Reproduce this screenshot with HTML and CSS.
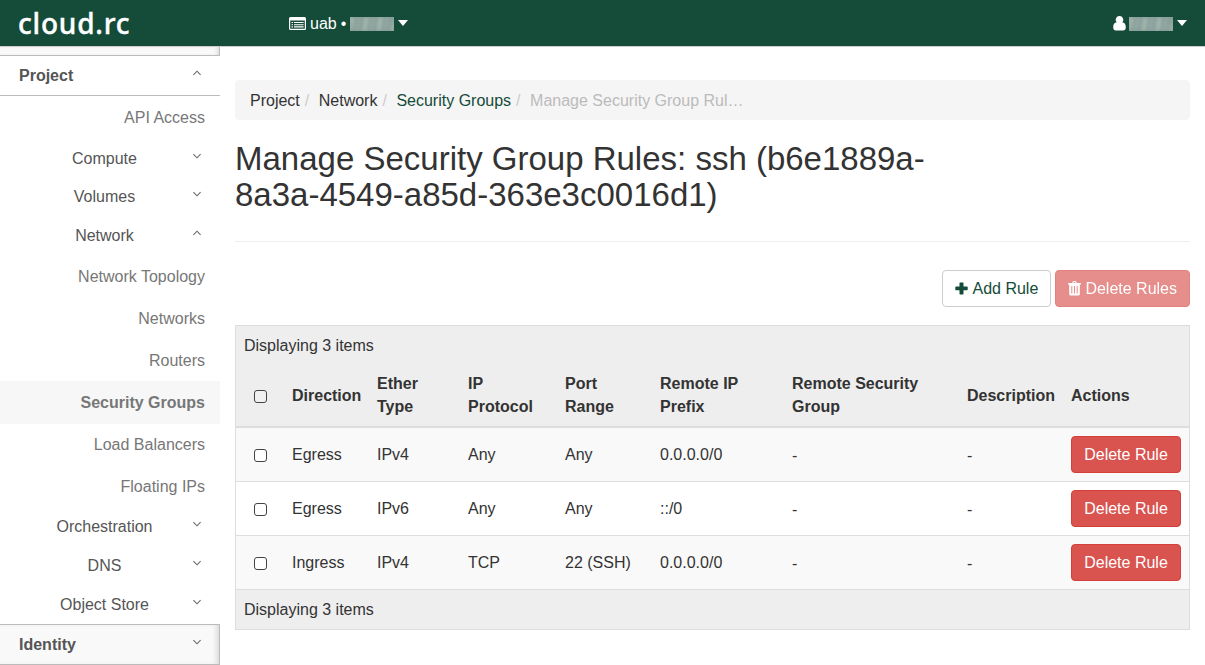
FILE: index.html
```html
<!DOCTYPE html>
<html lang="en">
<head>
<meta charset="utf-8">
<title>Manage Security Group Rules</title>
<link rel="stylesheet" href="styles.css">
</head>
<body>
<header class="navbar">
  <a class="brand">cloud.rc</a>
  <div class="context">
    <svg class="list-icon" width="17" height="13" viewBox="0 0 17 13"><path fill="#fff" fill-rule="evenodd" d="M1.5 0h14A1.5 1.5 0 0 1 17 1.5v10a1.5 1.5 0 0 1-1.5 1.5h-14A1.5 1.5 0 0 1 0 11.500v-10A1.500 1.500 0 0 1 1.500 0zM1.200 3.500v8.200h14.600V3.500z"/><path stroke="#fff" stroke-width="1.100" d="M2.500 5.500h1.500M2.500 7.700h1.500M2.500 9.900h1.500M5 5.500h9.600M5 7.700h9.600M5 9.900h9.600"/></svg>
    <span class="domain">uab</span><span class="dot">•</span>
    <span class="redacted"><i></i></span>
    <span class="caret"></span>
  </div>
  <div class="user">
    <svg width="13" height="15" viewBox="0 0 13 15"><path fill="#fff" d="M6.500 0a3.700 3.700 0 0 1 2.800 6.200c2.400.1 3.500 2 3.500 5 0 2-1 3.300-2.800 3.300H3C1.200 14.500.2 13.200.2 11.200c0-3 1.100-4.900 3.500-5A3.700 3.700 0 0 1 6.500 0z"/></svg>
    <span class="redacted"><i></i></span>
    <span class="caret"></span>
  </div>
</header>
<div class="layout">
  <nav class="sidebar">
    <div class="cut"></div>
    <div class="panel open"><span>Project</span><svg class="chev" viewBox="0 0 8 5"><path d="M1 4l3-3 3 3"/></svg></div>
    <a class="leaf">API Access</a>
    <div class="group first"><span>Compute</span><svg class="chev" viewBox="0 0 8 5"><path d="M1 1l3 3 3-3"/></svg></div>
    <div class="group"><span>Volumes</span><svg class="chev" viewBox="0 0 8 5"><path d="M1 1l3 3 3-3"/></svg></div>
    <div class="group"><span>Network</span><svg class="chev" viewBox="0 0 8 5"><path d="M1 4l3-3 3 3"/></svg></div>
    <a class="leaf">Network Topology</a>
    <a class="leaf">Networks</a>
    <a class="leaf">Routers</a>
    <a class="leaf active">Security Groups</a>
    <a class="leaf">Load Balancers</a>
    <a class="leaf last">Floating IPs</a>
    <div class="group"><span>Orchestration</span><svg class="chev" viewBox="0 0 8 5"><path d="M1 1l3 3 3-3"/></svg></div>
    <div class="group"><span>DNS</span><svg class="chev" viewBox="0 0 8 5"><path d="M1 1l3 3 3-3"/></svg></div>
    <div class="group"><span>Object Store</span><svg class="chev" viewBox="0 0 8 5"><path d="M1 1l3 3 3-3"/></svg></div>
    <div class="panel closed"><span>Identity</span><svg class="chev" viewBox="0 0 8 5"><path d="M1 1l3 3 3-3"/></svg></div>
  </nav>
  <main class="content">
    <div class="breadcrumb"><span>Project</span><span>Network</span><span class="link">Security Groups</span><span class="current">Manage Security Group Rul…</span></div>
    <h1>Manage Security Group Rules: ssh (b6e1889a-<br>8a3a-4549-a85d-363e3c0016d1)</h1>
    <div class="toolbar">
      <button class="btn add"><svg width="13" height="13" viewBox="0 0 13 13"><path fill="currentColor" d="M5 .5h3q.5 0 .5.500v3.500h3.500q.7 0 .7.700v2.300q0 .7-.7.700H8.500v3.600q0 .7-.7.700H5.200q-.7 0-.7-.7V8.200H1q-.7 0-.7-.7V5.200q0-.7.7-.7h3.500V1q0-.5.500-.5z"/></svg>Add Rule</button>
      <button class="btn danger disabled"><svg width="13" height="15" viewBox="0 0 13 15"><path fill="#fff" fill-rule="evenodd" d="M4.200 2l.6-1.500Q5 0 5.500 0h2q.5 0 .7.500L8.800 2h3.700q.5 0 .5.500v1h-1.200V13q0 1.500-1.500 1.500H2.700Q1.200 14.500 1.200 13V3.500H0v-1Q0 2 .5 2zm1.200 0h2.200L7.200 1H5.800zM3.300 5v7.500h1V5zm2.700 0v7.500h1V5zm2.700 0v7.500h1V5z"/></svg>Delete Rules</button>
    </div>
    <table class="rules">
      <colgroup><col class="c-check"><col class="c-dir"><col class="c-ether"><col class="c-proto"><col class="c-port"><col class="c-prefix"><col class="c-group"><col class="c-desc"><col class="c-act"></colgroup>
      <thead>
        <tr class="count"><td colspan="9">Displaying 3 items</td></tr>
        <tr class="heads"><th><span class="box"></span></th><th>Direction</th><th>Ether<br>Type</th><th>IP<br>Protocol</th><th>Port<br>Range</th><th>Remote IP<br>Prefix</th><th>Remote Security<br>Group</th><th>Description</th><th>Actions</th></tr>
      </thead>
      <tbody>
        <tr><td><span class="box"></span></td><td>Egress</td><td>IPv4</td><td>Any</td><td>Any</td><td>0.0.0.0/0</td><td class="none">-</td><td class="none">-</td><td><button class="btn danger">Delete Rule</button></td></tr>
        <tr><td><span class="box"></span></td><td>Egress</td><td>IPv6</td><td>Any</td><td>Any</td><td>::/0</td><td class="none">-</td><td class="none">-</td><td><button class="btn danger">Delete Rule</button></td></tr>
        <tr><td><span class="box"></span></td><td>Ingress</td><td>IPv4</td><td>TCP</td><td>22 (SSH)</td><td>0.0.0.0/0</td><td class="none">-</td><td class="none">-</td><td><button class="btn danger">Delete Rule</button></td></tr>
      </tbody>
      <tfoot><tr class="count"><td colspan="9">Displaying 3 items</td></tr></tfoot>
    </table>
  </main>
</div>
</body>
</html>
```
FILE: styles.css
```css
* { box-sizing: border-box; }
body { margin: 0; height: 665px; overflow: hidden; background: #fff; color: #333; font: 16px/23px "Liberation Sans", Arial, sans-serif; }
.navbar { height: 47px; display: flex; align-items: center; background: #144b39; border-bottom: 1px solid #ccc; color: #fff; }
.brand { width: 289px; padding-left: 18px; font: 500 28px/46px "Noto Sans", sans-serif; letter-spacing: .8px; -webkit-text-stroke: .4px #fff; }
.context, .user { display: flex; align-items: center; }
.domain { margin-left: 4px; }
.dot { margin: 0 4px; }
.user { margin-left: auto; padding-right: 18px; }
.user .redacted { margin-left: 3px; }
.redacted { width: 44px; height: 14px; margin-top: 1px; overflow: hidden; background: #7f9992; }
.redacted i { display: block; height: 14px; filter: blur(2px); background: repeating-linear-gradient(100deg, #b5c5bd 0 4px, #718e85 5px 7px, #a6b4b4 8px 11px, #638479 12px 14px); }
.caret { margin-left: 4px; border: 5px solid transparent; border-top: 6px solid #fff; border-bottom: 0; }
.layout { display: flex; }
.sidebar { width: 220px; flex: none; color: #555; }
.cut { height: 8px; background: #f9f9f9; border-right: 1px solid #bbb; box-shadow: inset -4px 0 4px -2px #ddd; }
.panel { height: 41px; display: flex; align-items: center; justify-content: space-between; padding: 0 18px 0 19px; font-weight: bold; border-top: 1px solid #bbb; border-bottom: 1px solid #bbb; }
.closed { background: #f9f9f9; border-right: 1px solid #bbb; padding-right: 17px; box-shadow: inset -5px 0 5px -2px #ddd; }
.chev { width: 10px; height: 6px; margin-bottom: 5px; fill: none; stroke: #666; stroke-width: .9; }
.leaf { display: block; height: 42px; padding-right: 15px; line-height: 44px; text-align: right; color: #777; }
.active { height: 43px; background: #f7f7f7; font-weight: bold; }
.active + .leaf { line-height: 42px; }
.leaf.last { height: 41px; line-height: 41px; }
.group { height: 39px; display: grid; grid-template-columns: 209px 10px; align-items: center; }
.group.first { padding-top: 1px; }
.group span { text-align: center; }
.group .chev { margin-left: -17px; }
.content { width: 955px; margin: 33px 0 0 15px; }
.breadcrumb { height: 40px; display: flex; align-items: center; padding-left: 15px; border-radius: 4px; background: #f5f5f5; }
.breadcrumb span + span::before { content: "/"; color: #ccc; padding: 0 9.5px 0 5px; }
.link { color: #144b39; }
.current { color: #bbb; }
h1 { height: 122px; margin: 0; padding-top: 21px; border-bottom: 1px solid #eee; font-size: 33px; line-height: 36px; font-weight: normal; }
.toolbar { display: flex; justify-content: flex-end; gap: 4px; margin: 28px 0 18px; }
.btn { height: 37px; display: flex; align-items: center; justify-content: center; gap: 4px; padding: 0 12px; border: 1px solid #ccc; border-radius: 4px; background: #fff; color: #144b39; font: inherit; white-space: nowrap; }
.add { width: 109px; }
.danger { background: #d9534f; border-color: #d43f3a; color: #fff; }
.disabled { opacity: .65; }
.rules { width: 955px; table-layout: fixed; border-collapse: separate; border-spacing: 0; border: 1px solid #ddd; }
td, th { padding: 0 8px; text-align: left; vertical-align: middle; }
.c-check { width: 48px; }
.c-dir { width: 85px; }
.c-ether { width: 91px; }
.c-proto { width: 97px; }
.c-port { width: 95px; }
.c-prefix { width: 132px; }
.c-group { width: 175px; }
.c-desc { width: 104px; }
.c-act { width: 126px; }
thead, tfoot { background: #eee; }
.count { height: 39px; }
.heads { height: 63px; }
.heads th { padding-bottom: 1px; border-bottom: 2px solid #ddd; }
tbody tr { height: 54px; }
tbody tr:nth-child(odd) { background: #f9f9f9; }
tbody td { border-bottom: 1px solid #ddd; }
tbody .none { padding-top: 2px; }
tbody .btn { width: 110px; }
.box { display: block; width: 13px; height: 13px; margin: 2px 0 0 10px; border: 1px solid #444; border-radius: 3px; background: #fff; }
tbody .box { margin-left: 10px; }
.heads .box { margin-top: 3px; background: #f1f1f1; }
```
